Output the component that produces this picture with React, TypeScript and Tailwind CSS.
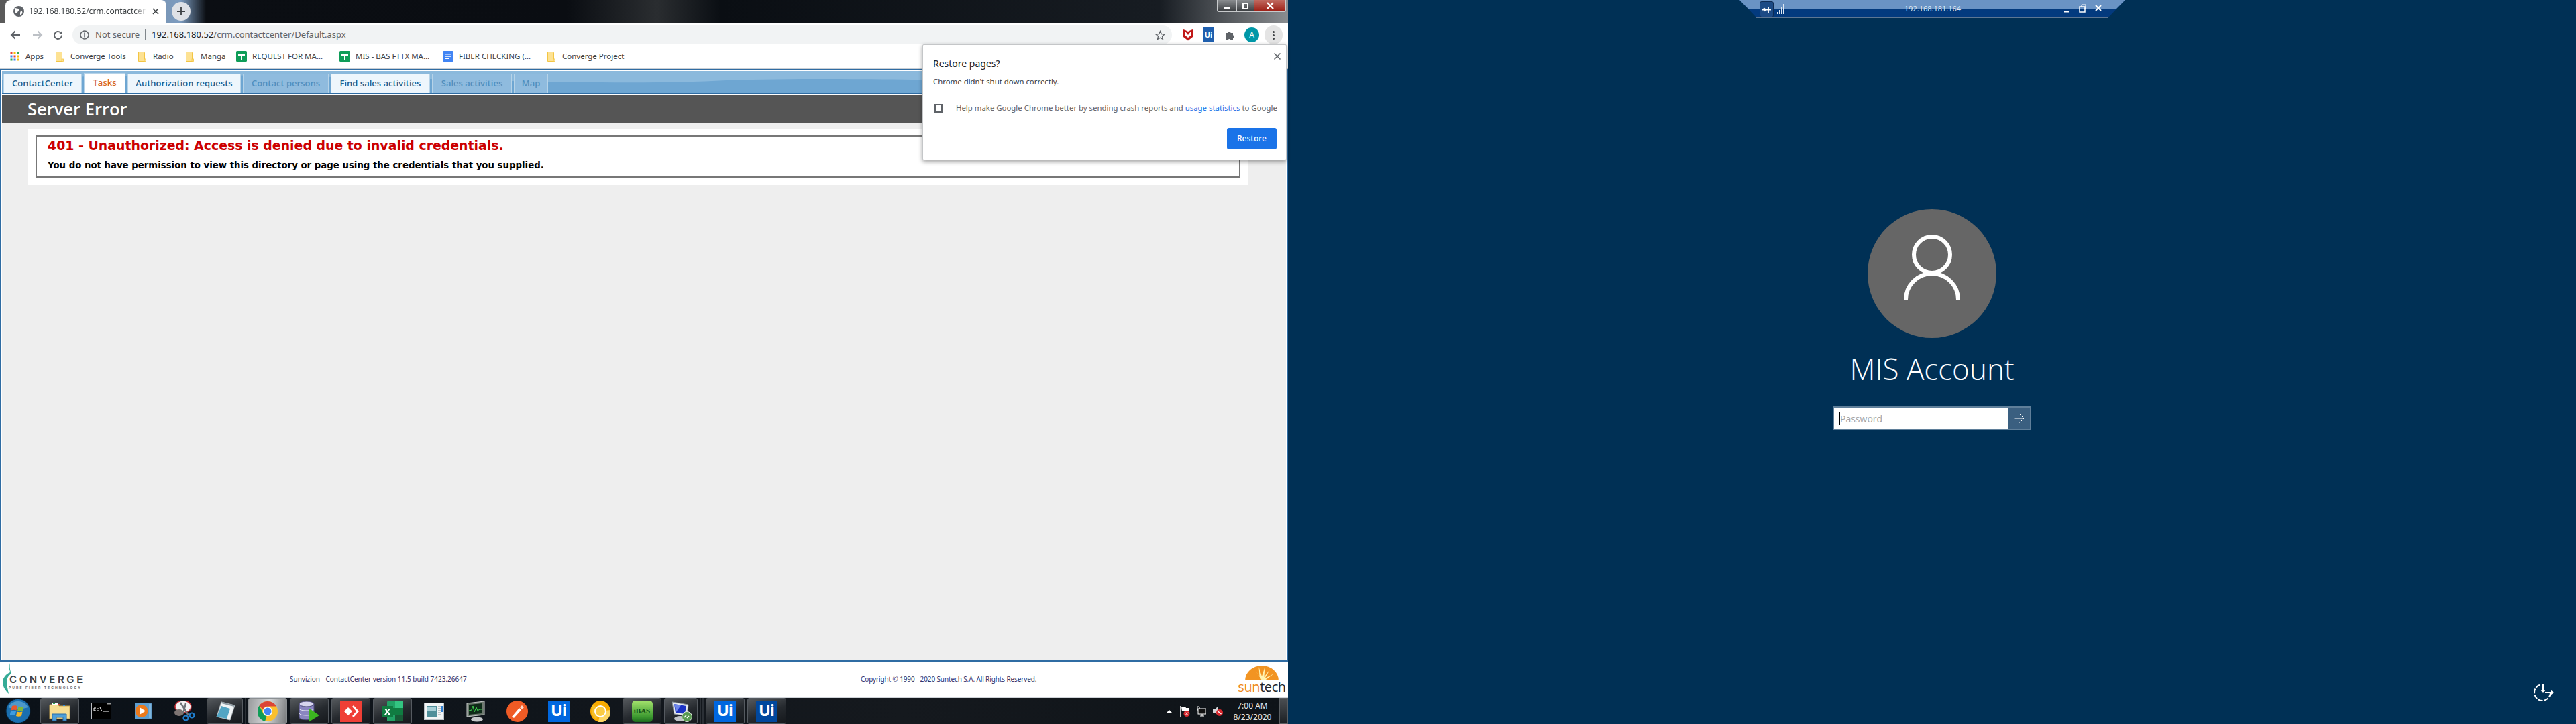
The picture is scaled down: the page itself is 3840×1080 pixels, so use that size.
import React from "react"

const bookmarks = [
  { kind: "apps", label: "Apps", slot: "w-[68px]", icon: "w-[23px]" },
  { kind: "folder", label: "Converge Tools", slot: "w-[123px]", icon: "w-[22px]" },
  { kind: "folder", label: "Radio", slot: "w-[71px]", icon: "w-[22px]" },
  { kind: "folder", label: "Manga", slot: "w-[75px]", icon: "w-[22px]" },
  { kind: "sheet", label: "REQUEST FOR MA...", slot: "w-[154px]", icon: "w-[24px]" },
  { kind: "sheet", label: "MIS - BAS FTTX MA...", slot: "w-[154px]", icon: "w-[24px]" },
  { kind: "doc", label: "FIBER CHECKING (...", slot: "w-[156px]", icon: "w-[24px]" },
  { kind: "folder", label: "Converge Project", slot: "w-[120px]", icon: "w-[22px]" },
]

const tabs = [
  { label: "ContactCenter", w: "w-[117px]", state: "on" },
  { label: "Tasks", w: "w-[62px]", state: "active" },
  { label: "Authorization requests", w: "w-[169px]", state: "on" },
  { label: "Contact persons", w: "w-[128px]", state: "off" },
  { label: "Find sales activities", w: "w-[148px]", state: "on" },
  { label: "Sales activities", w: "w-[119px]", state: "off" },
  { label: "Map", w: "w-[51px]", state: "off" },
]

function BookmarkIcon({ kind }: { kind: string }) {
  if (kind === "apps") {
    const colors = ["#ea4335", "#fbbc04", "#34a853", "#4285f4", "#ea4335", "#fbbc04", "#34a853", "#4285f4", "#fbbc04"]
    return (
      <svg width="14" height="14" viewBox="0 0 14 14">
        {colors.map((c, i) => (
          <rect key={i} x={(i % 3) * 5 + 0.5} y={Math.floor(i / 3) * 5 + 0.5} width="3" height="3" fill={c} />
        ))}
      </svg>
    )
  }
  if (kind === "sheet") {
    return (
      <svg width="16" height="16" viewBox="0 0 16 16">
        <rect width="16" height="16" rx="1.5" fill="#0f9d58" />
        <path d="M3 5h10v2H9v6H7V7H3z" fill="#fff" />
      </svg>
    )
  }
  if (kind === "doc") {
    return (
      <svg width="16" height="16" viewBox="0 0 16 16">
        <rect width="16" height="16" rx="1.5" fill="#4285f4" />
        <path d="M4 4h8v1.5H4zM4 7.2h8v1.5H4zM4 10.4h6v1.5H4z" fill="#fff" />
      </svg>
    )
  }
  return (
    <svg width="12" height="15" viewBox="0 0 12 15">
      <path d="M.5.5h8l1 1v13h-9z" fill="#fde293" stroke="#f3c544" />
      <rect x="9" y="11" width="2.5" height="3.5" fill="#fde293" stroke="#f3c544" strokeWidth="0.8" />
    </svg>
  )
}

function UiTile({ bg }: { bg: string }) {
  return (
    <div className={`flex h-[32px] w-[32px] items-center justify-center text-[23px] font-bold leading-none text-white font-['Inter',sans-serif] ${bg}`}>
      Ui
    </div>
  )
}

function TaskIcon({ name }: { name: string }) {
  switch (name) {
    case "explorer":
      return (
        <svg width="32" height="30" viewBox="0 0 32 30">
          <path d="M1 5h12l2 2h16v19H1z" fill="#f6dd92" stroke="#c8a750" />
          <rect x="5" y="2" width="9" height="4" fill="#fff" />
          <rect x="6" y="2" width="3" height="2" fill="#2fa84f" />
          <rect x="14" y="4" width="3" height="2" fill="#d8432f" />
          <rect x="21" y="5" width="3" height="2" fill="#2f8ee0" />
          <path d="M5 19h21v10h-5v-5H11v5H5z" fill="#4d9fd8" stroke="#2b6ea8" />
        </svg>
      )
    case "cmd":
      return (
        <svg width="30" height="25" viewBox="0 0 30 25">
          <rect x="0.5" y="0.5" width="29" height="24" fill="#000" stroke="#b9bcc0" />
          <rect x="24" y="1" width="5" height="1.5" fill="#9a9a9a" />
          <path d="M4 8h3M4 12h3M4 8v4M10 8v1M10 11v1M13 7l3 6M18 13h8" stroke="#fff" fill="none" />
        </svg>
      )
    case "media":
      return (
        <svg width="27" height="25" viewBox="0 0 27 25">
          <rect x="5" y="1" width="21" height="23" fill="#7db4dc" stroke="#4d86b4" />
          <rect x="1" y="1" width="21" height="23" fill="#5d9ed0" />
          <circle cx="11" cy="12.5" r="9.5" fill="#ec7a1c" />
          <path d="M8 7l9 5.5-9 5.5z" fill="#fff" />
        </svg>
      )
    case "snip":
      return (
        <svg width="32" height="32" viewBox="0 0 32 32">
          <ellipse cx="14" cy="9" rx="12" ry="9" fill="#f4f4f4" stroke="#c9323a" strokeWidth="1.5" />
          <ellipse cx="8" cy="18" rx="7" ry="5" fill="#7d7472" />
          <path d="M10 3l12 19M18 4l-4 15" stroke="#6e7378" strokeWidth="2.5" />
          <circle cx="18" cy="26" r="3.5" fill="none" stroke="#1f7fd0" strokeWidth="2.2" />
          <circle cx="27" cy="22" r="3.5" fill="none" stroke="#1f7fd0" strokeWidth="2.2" />
        </svg>
      )
    case "notepad":
      return (
        <svg width="32" height="32" viewBox="0 0 32 32">
          <path d="M11 2l20 5-7 22L4 24z" fill="#f0f4f6" stroke="#b5bcc0" />
          <path d="M11 8l13 4-5 15L4 24z" fill="#52a5c4" />
          <path d="M12 2l19 5-1 2-19-5z" fill="#8d9aa2" />
        </svg>
      )
    case "chrome":
      return (
        <svg width="30" height="30" viewBox="0 0 30 30">
          <circle cx="15" cy="15" r="15" fill="#fbc02d" />
          <path d="M15 0a15 15 0 0 1 13 7.500H15a7.500 7.500 0 0 0-7 5L2.500 6.500A15 15 0 0 1 15 0z" fill="#db4437" />
          <path d="M2.500 6.500L8.500 18.500a7.500 7.500 0 0 0 5 4L11 30A15 15 0 0 1 2.500 6.500z" fill="#0f9d58" />
          <circle cx="15" cy="15" r="7" fill="#fff" />
          <circle cx="15" cy="15" r="5.500" fill="#4285f4" />
        </svg>
      )
    case "db":
      return (
        <svg width="32" height="32" viewBox="0 0 32 32">
          <path d="M1 5v20c0 5 22 5 22 0V5z" fill="#8a86c0" stroke="#4a4878" />
          <ellipse cx="12" cy="5" rx="11" ry="4" fill="#d8d6ee" stroke="#4a4878" />
          <path d="M1 12c0 4 22 4 22 0M1 19c0 4 22 4 22 0" fill="none" stroke="#e4e2f4" />
          <path d="M15 11l16 11-16 10z" fill="#3cb520" />
        </svg>
      )
    case "anydesk":
      return (
        <svg width="32" height="32" viewBox="0 0 32 32">
          <rect width="32" height="32" fill="#ef3f36" />
          <path d="M12 10l6 6-6 6-6-6z" fill="#fff" />
          <path d="M18 9l2-2 8 9-8 9-2-2 6-7z" fill="#fff" />
        </svg>
      )
    case "excel":
      return (
        <svg width="32" height="30" viewBox="0 0 32 30">
          <rect x="8" y="0" width="24" height="30" rx="1" fill="#21a366" />
          <rect x="20" y="0" width="12" height="10" fill="#33c481" />
          <rect x="8" y="10" width="24" height="10" fill="#107c41" />
          <rect x="20" y="20" width="12" height="10" fill="#185c37" />
          <rect x="0" y="7" width="17" height="17" fill="#107c41" />
          <path d="M4 11h3l1.500 3L10 11h3l-3 4.500 3 4.500h-3l-1.500-3L7 20H4l3-4.500z" fill="#fff" />
        </svg>
      )
    case "window":
      return (
        <svg width="30" height="26" viewBox="0 0 30 26">
          <rect x="0.5" y="0.5" width="29" height="25" fill="#f2f5f6" stroke="#bcc3c8" />
          <rect x="4" y="5" width="15" height="17" fill="#4f8f9a" />
          <rect x="5" y="6" width="13" height="7" fill="#a8d0d8" />
          <path d="M21 6h4M21 9h4M21 12h4M21 15h4M21 18h4" stroke="#8e979c" />
          <rect x="26" y="5" width="2" height="9" fill="#2f7fd0" />
        </svg>
      )
    case "monitor":
      return (
        <svg width="30" height="32" viewBox="0 0 30 32">
          <path d="M2 4l26-3v20L2 24z" fill="#6f7a70" stroke="#c4c8c8" />
          <path d="M5 6l20-2v15L5 21z" fill="#0e2a18" />
          <path d="M5 15l4-1 2-6 2 9 3-7 2 5 3-2 4 0" fill="none" stroke="#3fd050" />
          <ellipse cx="17" cy="28" rx="9" ry="3.5" fill="#c6c8ca" />
        </svg>
      )
    case "postman":
      return (
        <svg width="32" height="32" viewBox="0 0 32 32">
          <circle cx="16" cy="16" r="16" fill="#ef5b25" />
          <path d="M8 24l11-13 3 3-11 12z" fill="#fff" />
          <path d="M20 10l3-3 3 3-3 3z" fill="#ffd8c8" />
        </svg>
      )
    case "canary":
      return (
        <svg width="30" height="32" viewBox="0 0 30 32">
          <ellipse cx="15" cy="16" rx="15" ry="16" fill="#f9ab00" />
          <path d="M4 6L13 13 9 28A15 16 0 0 1 4 6z" fill="#f6bf26" />
          <path d="M15 16L30 14A15 16 0 0 1 12 32z" fill="#fdd663" />
          <circle cx="15" cy="16" r="8" fill="#fbcb43" stroke="#fff" strokeWidth="2" />
        </svg>
      )
    case "ibas":
      return (
        <div className="flex h-[32px] w-[31px] items-center justify-center rounded-[5px] bg-[linear-gradient(180deg,#a4e26c,#3d9a30_75%,#1d6b1e)] text-[11px] font-bold text-[#0f4d16] font-['Liberation_Serif',serif]">
          iBAS
        </div>
      )
    case "remote":
      return (
        <svg width="32" height="32" viewBox="0 0 32 32">
          <path d="M3 2l24 4-2 17L6 20z" fill="#e6eaee" stroke="#8c949a" />
          <path d="M6 5l18 3-2 12L8 18z" fill="#1c33c4" />
          <path d="M6 5l10 2-7 10z" fill="#6d86ea" />
          <ellipse cx="15" cy="27" rx="9" ry="4" fill="#c0c4c8" />
          <circle cx="25" cy="24" r="7.500" fill="#5a9a52" stroke="#e4e8e4" />
          <path d="M21 25l3-3M25 26l3-3" stroke="#fff" strokeWidth="1.500" />
        </svg>
      )
    default:
      return null
  }
}

const taskItems = [
  { name: "explorer", box: true },
  { name: "cmd", box: false },
  { name: "media", box: false },
  { name: "snip", box: false },
  { name: "notepad", box: true },
  { name: "sep", box: false },
  { name: "chrome", box: true, active: true },
  { name: "db", box: true },
  { name: "anydesk", box: true },
  { name: "excel", box: true },
  { name: "window", box: false },
  { name: "monitor", box: false },
  { name: "postman", box: false },
  { name: "ui", box: false },
  { name: "canary", box: false },
  { name: "ibas", box: true },
  { name: "remote", box: true, narrow: true },
  { name: "sep2", box: false },
  { name: "ui", box: true },
  { name: "ui2", box: true },
]

function Taskbar() {
  return (
    <div className="flex h-[40px] items-stretch border-t border-[#cfd3d8] bg-[linear-gradient(90deg,#0b1118,#10151b_40%,#15191e_70%,#0e1318)]">
      <div className="ml-[8px] mr-[14px] mt-[1px] h-[37px] w-[38px] shrink-0">
        <svg width="38" height="37" viewBox="0 0 38 37">
          <circle cx="19" cy="18.500" r="18" fill="#1a6fb0" stroke="#08253c" />
          <path d="M4 13a16 14 0 0 1 30 0c-8 3-22 3-30 0z" fill="#6fb6dc" opacity="0.6" />
          <path d="M10 11c3-1 6-1 8 .5l-1.500 6c-2-1-5-1-8 0z" fill="#e8582c" />
          <path d="M19.500 12c2 1 5 1 8 0l-1.500 6c-3 1-6 1-8 0z" fill="#7cb83a" />
          <path d="M8 19c3-1 6-1 8 0l-1.500 6c-2-1-5-1-8 0z" fill="#3f9ce0" />
          <path d="M17.500 19.500c2 1 5 1 8 0L24 26c-3 1-6 1-8 0z" fill="#f4b625" />
        </svg>
      </div>
      <div className="flex items-stretch">
        {taskItems.map((t, i) => {
          if (t.name === "sep" || t.name === "sep2") {
            return (
              <div key={i} className={`${t.name === "sep" ? "w-[8px]" : "w-[12px]"} flex justify-center gap-[2px]`}>
                <div className="h-full w-[2px] bg-[#2b3036]" />
                {t.name === "sep2" && <div className="h-full w-[2px] bg-[#2b3036]" />}
              </div>
            )
          }
          const width = t.narrow ? "w-[50px]" : t.name === "notepad" ? "w-[54px]" : "w-[58px]"
          const margin = t.name === "notepad" || t.narrow ? "mr-0" : "mr-[4px]"
          const box = t.active
            ? "rounded-[3px] border border-[#8b8f92] bg-[linear-gradient(100deg,#9a9c9e,#d4d6d8_50%,#77797b)]"
            : t.box
              ? "rounded-[3px] border border-[#555a60] bg-[linear-gradient(160deg,#55595d,#25292e_55%,#15181c)]"
              : ""
          return (
            <div key={i} className={`flex h-[39px] items-center justify-center ${width} ${margin} ${box}`}>
              {t.name === "ui" && <UiTile bg="bg-[#0067df]" />}
              {t.name === "ui2" && <UiTile bg="bg-[#00479d]" />}
              {t.name !== "ui" && t.name !== "ui2" && <TaskIcon name={t.name} />}
            </div>
          )
        })}
      </div>
      <div className="flex flex-1 items-center justify-end">
        <div className="mr-[12px] h-0 w-0 border-x-[4px] border-b-[4px] border-x-transparent border-b-white" />
        <div className="relative mr-[10px] h-[16px] w-[15px]">
          <svg width="15" height="16" viewBox="0 0 15 16">
            <path d="M1 0v16" stroke="#fff" strokeWidth="1.500" />
            <path d="M2 1h6l1 2h5v5H3z" fill="#fff" />
            <circle cx="10" cy="11.500" r="4.500" fill="#d8262c" />
            <path d="M8 9.500l4 4M12 9.500l-4 4" stroke="#fff" />
          </svg>
        </div>
        <div className="mr-[10px]">
          <svg width="14" height="16" viewBox="0 0 14 16">
            <path d="M1 1h3v5H1zM2.500 6v3" stroke="#fff" fill="none" />
            <rect x="2" y="4" width="12" height="8" fill="#111" stroke="#fff" />
            <path d="M8 12v3M5 15h6" stroke="#fff" />
          </svg>
        </div>
        <div className="mr-[8px]">
          <svg width="15" height="16" viewBox="0 0 15 16">
            <path d="M0 5h3l4-4v12L3 10H0z" fill="#cfd3d6" />
            <circle cx="10" cy="10" r="5" fill="#d8262c" />
            <path d="M7.500 8l5 4" stroke="#fff" strokeWidth="1.500" />
          </svg>
        </div>
        <div className="w-[72px] text-center text-[12px] leading-[17px] text-[#e6e8ea]">
          <div>7:00 AM</div>
          <div>8/23/2020</div>
        </div>
        <div className="ml-[4px] h-full w-[13px] border border-[#5a5e62] bg-[linear-gradient(180deg,#4a4e52,#1c2024)]" />
      </div>
    </div>
  )
}

function Footer() {
  return (
    <div className="flex h-[53px] items-center bg-white text-[10px] text-[#33336b]">
      <div className="relative h-[52px] w-[132px] shrink-0">
        <svg className="absolute left-[2px] top-0" width="16" height="48" viewBox="0 0 16 48">
          <path d="M13 1C10 8 13 12 13 15 6 18 2 24 2 30c0 7 5 13 9 17C9 38 7 30 9 24c1-3 4-6 6-7C13 12 12 7 13 1z" fill="#35ab96" />
        </svg>
        <div className="absolute left-[14px] top-[18px] text-[15px] font-semibold leading-none tracking-[3.6px] text-[#3b4044] font-['Inter',sans-serif]">
          CONVERGE
        </div>
        <div className="absolute left-[13px] top-[36px] whitespace-nowrap text-[5px] font-bold leading-none tracking-[2.1px] text-[#6a6e72] font-['Inter',sans-serif]">
          PURE FIBER TECHNOLOGY
        </div>
      </div>
      <div className="ml-[300px] w-[252px] whitespace-nowrap">Sunvizion - ContactCenter version 11.5 build 7423.26647</div>
      <div className="ml-[599px] w-[262px] whitespace-nowrap tracking-[-0.12px]">Copyright © 1990 - 2020 Suntech S.A. All Rights Reserved.</div>
      <div className="ml-[299px] flex w-[74px] flex-col items-center">
        <svg width="52" height="22" viewBox="0 0 46 22" preserveAspectRatio="none">
          <path d="M1 22a22 22 0 0 1 44 0z" fill="#f29422" />
          <path d="M23 22L14 6l6 11-1-15 4 14 4-14-1 15 8-12-7 14 12-7-12 10z" fill="#fff3b0" />
        </svg>
        <div className="text-[20px] font-medium leading-[20px] tracking-[-0.4px] font-['Open_Sans',sans-serif]">
          <span className="text-[#ef8a1c]">sun</span>
          <span className="text-[#22262a]">tech</span>
        </div>
      </div>
    </div>
  )
}

function RestorePopup() {
  return (
    <div className="absolute left-[1375px] top-[66px] z-10 h-[173px] w-[543px] rounded-[2px] border border-[#c4c6c8] bg-white shadow-[0_2px_6px_rgba(0,0,0,0.4)]">
      <div className="absolute right-[7px] top-[11px] text-[#5f6368]">
        <svg width="12" height="12" viewBox="0 0 12 12">
          <path d="M1.500 1.500l9 9M10.500 1.500l-9 9" stroke="#5f6368" strokeWidth="1.500" />
        </svg>
      </div>
      <div className="pl-[15px] pt-[18px] text-[14px] leading-[20px] text-[#202124]">Restore pages?</div>
      <div className="pl-[15px] pt-[8px] text-[11.400px] leading-[18px] text-[#3c4043]">Chrome didn't shut down correctly.</div>
      <div className="flex items-center pl-[17px] pt-[21px]">
        <div className="h-[13px] w-[12px] shrink-0 border-2 border-[#5f6368]" />
        <div className="ml-[20px] whitespace-nowrap text-[11.400px] leading-[18px] text-[#5f6368]">
          Help make Google Chrome better by sending crash reports and <span className="text-[#1a73e8]">usage statistics</span> to Google
        </div>
      </div>
      <div className="absolute bottom-[15px] right-[14px] flex h-[32px] w-[74px] items-center justify-center rounded-[3px] bg-[#1a73e8] text-[12px] font-medium text-white">
        Restore
      </div>
    </div>
  )
}

function LeftScreen() {
  return (
    <div className="relative flex h-[1080px] w-[1920px] flex-col bg-white font-['Noto_Sans',sans-serif]">
      {/* chrome title strip */}
      <div className="relative flex h-[34px] items-end bg-[linear-gradient(90deg,#5a5a5a_0%,#5a5a5a_0.4%,#7c9cc0_14%,#0b0e13_16%,#0a0d12_44%,#2a2d30_51%,#0a0e13_56%,#171c22_90%,#8a8d90_100%)]">
        <div className="ml-[8px] flex h-[34px] w-[240px] items-center rounded-t-[8px] bg-white pl-[12px]">
          <svg width="16" height="16" viewBox="0 0 16 16">
            <circle cx="8" cy="8" r="8" fill="#5f6368" />
            <path d="M3 3c2 1 4 0 5 2s-2 3-2 5-3 1-4-2M11 8c2-1 3 1 2 3s-3 3-3 1 0-3 1-4z" fill="#fff" />
          </svg>
          <div className="ml-[7px] w-[175px] overflow-hidden whitespace-nowrap text-[12px] text-[#3c4043] [mask-image:linear-gradient(90deg,#000_90%,transparent)]">
            192.168.180.52/crm.contactcenter/Default.aspx
          </div>
          <svg className="ml-[9px]" width="10" height="10" viewBox="0 0 10 10">
            <path d="M1 1l8 8M9 1l-8 8" stroke="#3c4043" strokeWidth="1.600" />
          </svg>
        </div>
        <div className="mb-[3px] ml-[8px] flex h-[28px] w-[28px] items-center justify-center rounded-full bg-[#dee1e6]">
          <svg width="14" height="14" viewBox="0 0 14 14">
            <path d="M7 1v12M1 7h12" stroke="#3c4043" strokeWidth="1.800" />
          </svg>
        </div>
        <div className="absolute right-[3px] top-0 flex h-[18px] w-[103px] overflow-hidden rounded-b-[3px] border border-t-0 border-[#c8cacc]">
          <div className="flex w-[28px] items-center justify-center bg-[linear-gradient(180deg,#8a8d90,#3a3d40)]">
            <div className="mt-[6px] h-[3px] w-[10px] bg-white" />
          </div>
          <div className="flex w-[27px] items-center justify-center border-x border-[#c8cacc] bg-[linear-gradient(180deg,#8a8d90,#3a3d40)]">
            <div className="h-[10px] w-[9px] border-2 border-white" />
          </div>
          <div className="flex flex-1 items-center justify-center bg-[linear-gradient(180deg,#c06a60,#9c1e14)]">
            <svg width="11" height="11" viewBox="0 0 11 11">
              <path d="M1 1l9 9M10 1l-9 9" stroke="#fff" strokeWidth="2.400" />
            </svg>
          </div>
        </div>
      </div>

      {/* toolbar */}
      <div className="flex h-[32px] items-end bg-white">
        <div className="flex h-[28px] w-[108px] shrink-0 items-center pl-[15px]">
          <svg width="16" height="14" viewBox="0 0 16 14">
            <path d="M15 7H2M7.500 1.500L2 7l5.500 5.500" fill="none" stroke="#5f6368" strokeWidth="2" />
          </svg>
          <svg className="ml-[17px]" width="16" height="14" viewBox="0 0 16 14">
            <path d="M1 7h13M8.500 1.500L14 7l-5.500 5.500" fill="none" stroke="#bdc1c6" strokeWidth="2" />
          </svg>
          <svg className="ml-[15px]" width="15" height="15" viewBox="0 0 15 15">
            <path d="M13 7.500a5.500 5.500 0 1 1-1.800-4.100" fill="none" stroke="#5f6368" strokeWidth="2" />
            <path d="M14 0.500v5.500H8.500z" fill="#5f6368" />
          </svg>
        </div>
        <div className="flex h-[28px] flex-1 items-center rounded-full bg-[#f1f3f4] pl-[11px]">
          <svg width="14" height="14" viewBox="0 0 14 14">
            <circle cx="7" cy="7" r="6" fill="none" stroke="#5f6368" strokeWidth="1.500" />
            <path d="M7 6v4.500M7 3.500v1.500" stroke="#5f6368" strokeWidth="1.500" />
          </svg>
          <span className="ml-[9px] text-[13px] text-[#5f6368]">Not secure</span>
          <div className="ml-[8px] h-[16px] w-px bg-[#80868b]" />
          <span className="ml-[9px] text-[13px] text-[#5f6368]">
            <span className="text-[#202124]">192.168.180.52</span>/crm.contactcenter/Default.aspx
          </span>
          <div className="flex-1" />
          <svg className="mr-[10px]" width="15" height="15" viewBox="0 0 24 24">
            <path d="M12 2.500l3 6.500 7 .8-5.200 4.700 1.500 7L12 17.900l-6.300 3.600 1.500-7L2 9.800l7-.8z" fill="none" stroke="#5f6368" strokeWidth="2.200" />
          </svg>
        </div>
        <div className="flex h-[28px] w-[173px] shrink-0 items-center pl-[17px]">
          <svg width="14" height="18" viewBox="0 0 14 18">
            <path d="M0 1l3 1 4 2 4-2 3-1v11l-7 5.500L0 12z" fill="#c01818" />
            <path d="M3 4l4 5 4-5v6l-4 3-4-3z" fill="#fff" />
          </svg>
          <div className="ml-[16px] flex h-[22px] w-[15px] items-center justify-center bg-[#1f5fae] text-[11px] font-bold text-white">Ui</div>
          <svg className="ml-[17px]" width="15" height="15" viewBox="0 0 15 15">
            <path d="M1 4h3.500a2 2 0 1 1 4 0H12v3.500a2 2 0 1 1 0 4V15H8.500a2 2 0 1 0-4 0H1z" fill="#5f6368" />
          </svg>
          <div className="ml-[14px] flex h-[22px] w-[22px] items-center justify-center rounded-full bg-[#0097a7] text-[12px] text-white">A</div>
          <div className="ml-[8px] flex h-[28px] w-[27px] flex-col items-center justify-center gap-[2px] rounded-full bg-[#e4e4e4]">
            <div className="h-[3px] w-[3px] rounded-full bg-[#3c4043]" />
            <div className="h-[3px] w-[3px] rounded-full bg-[#3c4043]" />
            <div className="h-[3px] w-[3px] rounded-full bg-[#3c4043]" />
          </div>
        </div>
      </div>

      {/* bookmarks */}
      <div className="flex h-[36px] items-center bg-white pl-[15px] text-[11.500px] text-[#3c4043]">
        {bookmarks.map((b) => (
          <div key={b.label} className={`flex items-center ${b.slot}`}>
            <div className={`flex shrink-0 ${b.icon}`}>
              <BookmarkIcon kind={b.kind} />
            </div>
            <span className="whitespace-nowrap">{b.label}</span>
          </div>
        ))}
      </div>

      {/* page */}
      <div className="flex flex-1 flex-col border-t border-[#c9ced4] bg-white">
        <div className="flex flex-1 flex-col border-2 border-[#2f6ca3]">
          <div className="flex flex-1 flex-col border border-white">
            <div className="relative h-[34px] overflow-hidden border-b-2 border-[#2f6ca3] bg-[#6ea6d2]">
              <svg className="absolute left-0 top-0" width="1914" height="22" viewBox="0 0 1914 22" preserveAspectRatio="none">
                <path d="M0 0h1914v18C1500 18 1300 8 1080 14 900 24 600 8 300 6 150 6 60 10 0 14z" fill="#8bb9dc" />
              </svg>
              <div className="relative flex h-[32px] items-end pl-[2px] pt-[4px] text-[13px] font-semibold font-['Open_Sans',sans-serif]">
                {tabs.map((t) => {
                  const style =
                    t.state === "active"
                      ? "bg-white text-[#d9681d] h-[29px]"
                      : t.state === "on"
                        ? "bg-[#eef6fc] text-[#205f8e] h-[28px]"
                        : "bg-[#8fbbde] text-[#4f8fbf] h-[28px]"
                  return (
                    <div key={t.label} className={`mr-[3px] flex items-center justify-center whitespace-nowrap border border-b-0 border-[#b6d3e8] ${t.w} ${style}`}>
                      {t.label}
                    </div>
                  )
                })}
              </div>
            </div>
            <div className="mt-px flex h-[43px] items-center bg-[#555555] pl-[38px] text-[25.500px] font-semibold text-white font-['Open_Sans',sans-serif]">
              Server Error
            </div>
            <div className="flex-1 bg-[#eeeeee] pl-[38px] pr-[56px] pt-[8px]">
              <div className="h-[84px] bg-white px-[13px] pt-[10px]">
                <div className="h-[63px] border border-y-2 border-[#777777] pl-[16px] font-['DejaVu_Sans',sans-serif]">
                  <div className="pt-[1px] text-[18.900px] font-bold leading-[24px] text-[#cc0000]">
                    401 - Unauthorized: Access is denied due to invalid credentials.
                  </div>
                  <div className="pt-[10px] text-[13.300px] font-bold leading-[16px] text-black">
                    You do not have permission to view this directory or page using the credentials that you supplied.
                  </div>
                </div>
              </div>
            </div>
          </div>
        </div>
      </div>

      <Footer />
      <Taskbar />
      <RestorePopup />
    </div>
  )
}

function RightScreen() {
  return (
    <div className="relative flex h-[1080px] w-[1920px] flex-col items-center bg-[#003055] pt-[312px] font-['Open_Sans',sans-serif]">
      {/* remote desktop connection bar */}
      <div className="absolute left-[673px] top-0 h-[27px] w-[575px]">
        <svg className="absolute inset-0" width="575" height="27" viewBox="0 0 575 27">
          <path d="M0 0h575l-25 26H25z" fill="#033a7e" />
          <path d="M0 0h575l-14 14H14z" fill="#6a93c4" />
          <path d="M25 26h525" stroke="#7c8ea8" strokeWidth="1.500" />
        </svg>
        <div className="absolute left-[30px] top-[2px] flex h-[24px] w-[21px] items-center justify-center rounded-[3px] border border-[#0f2c55] bg-[#1c4a85]">
          <svg width="13" height="11" viewBox="0 0 13 11">
            <path d="M0 5.500h13M9 1v9M2 3l3 2.500L2 8" stroke="#fff" strokeWidth="1.800" fill="none" />
          </svg>
        </div>
        <svg className="absolute left-[56px] top-[6px]" width="11" height="15" viewBox="0 0 11 15">
          <path d="M0 12h2v3H0zM3 9h2v6H3zM6 5h2v10H6zM9 0h2v15H9z" fill="#dce6f2" />
        </svg>
        <div className="absolute left-0 top-[5px] w-full pl-[1px] text-center text-[11px] leading-[16px] text-[#dfe8f2] font-['Noto_Sans',sans-serif]">
          192.168.181.164
        </div>
        <svg className="absolute left-[484px] top-[6px]" width="62" height="14" viewBox="0 0 62 14">
          <path d="M0 10h7v2.500H0z" fill="#fff" />
          <rect x="23" y="4" width="8" height="8" fill="none" stroke="#fff" strokeWidth="1.500" />
          <path d="M26 4V1h6v6h-2" fill="none" stroke="#fff" />
          <path d="M47 2l8 8M55 2l-8 8" stroke="#fff" strokeWidth="2" />
        </svg>
      </div>

      <div className="flex h-[192px] w-[192px] items-center justify-center rounded-full bg-[#666666]">
        <svg width="192" height="192" viewBox="0 0 192 192">
          <circle cx="96" cy="68" r="27" fill="none" stroke="#fff" strokeWidth="6" />
          <path d="M57 135a39 39 0 0 1 78 0" fill="none" stroke="#fff" strokeWidth="6" />
        </svg>
      </div>
      <div className="mt-[15px] text-[44px] font-light leading-[62px] text-white">MIS Account</div>
      <div className="mt-[25px] flex h-[36px] w-[296px] border-2 border-[#5f7f9a]">
        <div className="relative flex flex-1 items-center bg-white pl-[9px] text-[14px] text-[#a3a3a3]">
          <div className="absolute left-[8px] top-[6px] h-[20px] w-px bg-black" />
          Password
        </div>
        <div className="flex w-[32px] items-center justify-center bg-[#3a5f80]">
          <svg width="16" height="16" viewBox="0 0 16 16">
            <path d="M0.500 8h14.500M8.500 1.500L15 8l-6.500 6.500" fill="none" stroke="#fff" />
          </svg>
        </div>
      </div>
      <div className="absolute bottom-[33px] right-[32px]">
        <svg width="32" height="28" viewBox="0 0 32 28">
          <path d="M10 2.700A12 12 0 1 0 26 14" fill="none" stroke="#fff" strokeWidth="2" strokeDasharray="7 2" />
          <path d="M15 1v10" stroke="#fff" strokeWidth="2" />
          <path d="M11 10h8l-4 5z" fill="#fff" />
          <path d="M18 14h9" stroke="#fff" strokeWidth="2" />
          <path d="M26 10l5 4-5 4z" fill="#fff" />
        </svg>
      </div>
    </div>
  )
}

export default function App() {
  return (
    <div className="flex h-[1080px] w-[3840px] overflow-hidden">
      <LeftScreen />
      <RightScreen />
    </div>
  )
}
